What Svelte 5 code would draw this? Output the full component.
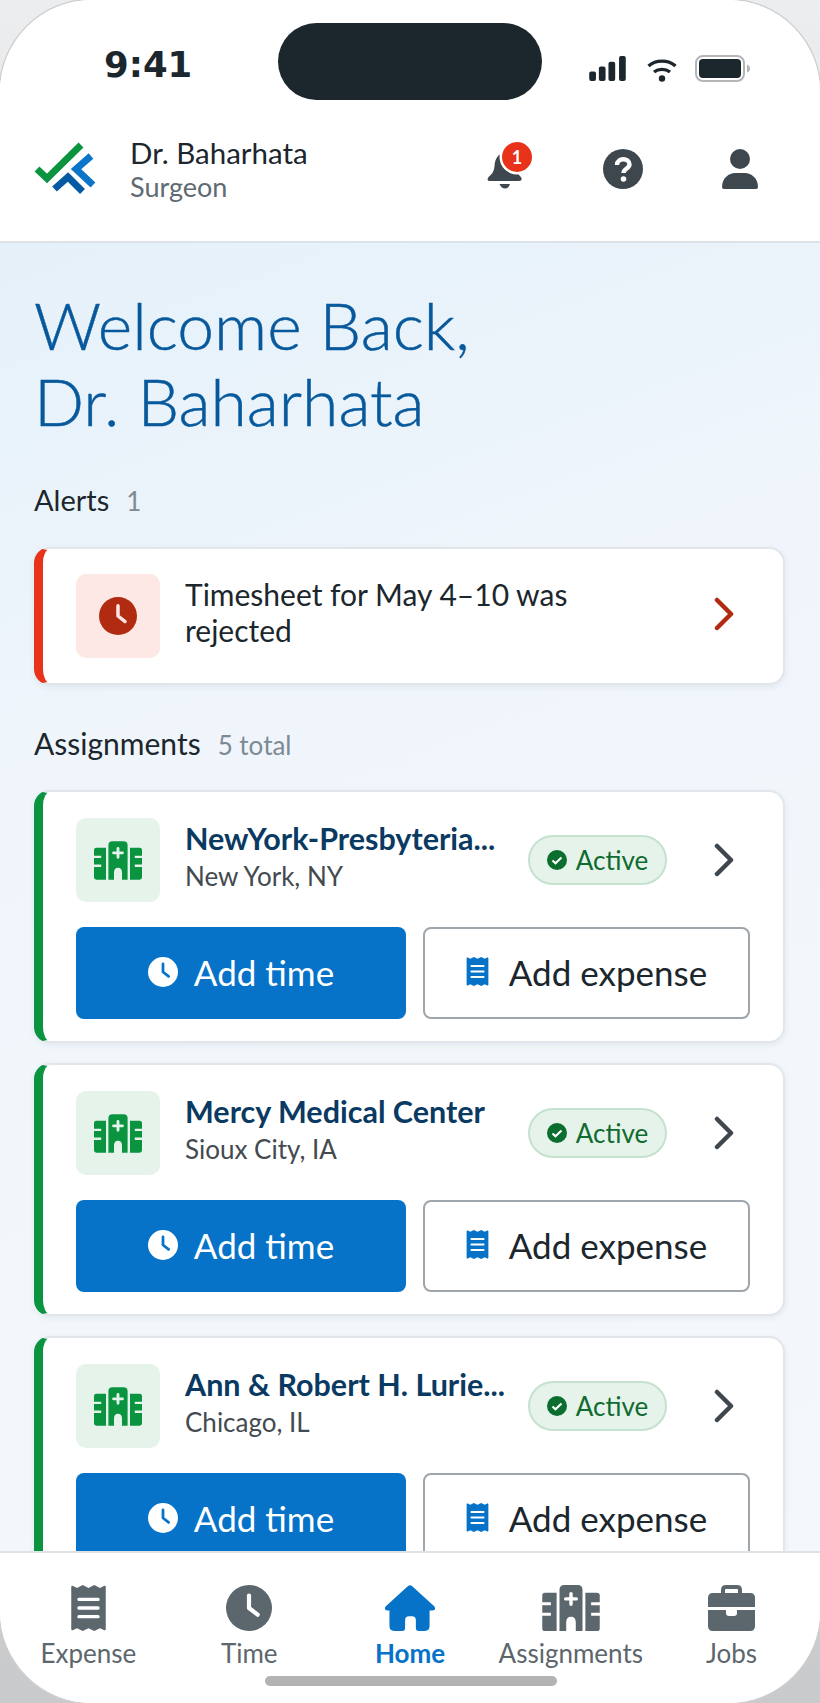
<script>
  const cards = [
    { title: 'NewYork-Presbyteria...', sub: 'New York, NY' },
    { title: 'Mercy Medical Center', sub: 'Sioux City, IA' },
    { title: 'Ann & Robert H. Lurie...', sub: 'Chicago, IL' }
  ];
</script>

{#snippet clock(size, bg, hand)}
  <svg class="ico" width={size} height={size} viewBox="0 0 48 48">
    <circle cx="24" cy="24" r="24" fill={bg} />
    <path d="M24 11v13l9 7" fill="none" stroke={hand} stroke-width="4.400" stroke-linecap="round" stroke-linejoin="round" />
  </svg>
{/snippet}

{#snippet receipt(w, h, color, line)}
  <svg class="ico" width={w} height={h} viewBox="0 0 36 48">
    <path d="M0 2 Q0 0 2 1L6 3 12 0 18 3 24 0 30 3 34 1Q36 0 36 2V46Q36 48 34 47L30 45 24 48 18 45 12 48 6 45 2 47Q0 48 0 46Z" fill={color} />
    <path d="M8 15h20M8 24h20M8 33h20" stroke={line} stroke-width="3.400" stroke-linecap="round" />
  </svg>
{/snippet}

{#snippet hospital(w, h, color, line)}
  <svg class="ico" width={w} height={h} viewBox="0 0 60 48">
    <path d="M18 5Q18 0 23 0H37Q42 0 42 5V48H35V39Q35 33 30 33T25 39V48H18Z" fill={color} />
    <path d="M0 11Q0 8 3 8H15V48H3Q0 48 0 45V32H9V29H0V21H9V18H0Z" fill={color} />
    <path d="M60 11Q60 8 57 8H45V48H57Q60 48 60 45V32H51V29H60V21H51V18H60Z" fill={color} />
    <path d="M30 9v11M24.500 14.500h11" stroke={line} stroke-width="3.600" stroke-linecap="round" />
  </svg>
{/snippet}

<div class="phone">
  <header class="top">
    <div class="status">
      <span class="clock">9:41</span>
      <div class="island"></div>
      <div class="sys">
        <svg width="37" height="25" viewBox="0 0 38 26" fill="#1b262d">
          <rect x="0" y="16" width="7" height="10" rx="2" /><rect x="10" y="11" width="7" height="15" rx="2" /><rect x="20" y="6" width="7" height="20" rx="2" /><rect x="31" y="0" width="7" height="26" rx="2" />
        </svg>
        <svg class="wifi" width="30" height="24" viewBox="0 0 30 24" fill="none" stroke="#1b262d" stroke-width="3.400">
          <path d="M1.500 8C9 1.500 21 1.500 28.500 8" /><path d="M7 14C11.500 10.500 18.500 10.500 23 14" />
          <circle cx="15" cy="20.500" r="3.200" fill="#1b262d" stroke="none" />
        </svg>
        <svg width="56" height="27" viewBox="0 0 56 27">
          <rect x="1" y="1" width="48" height="25" rx="7" fill="none" stroke="#b3b5b7" stroke-width="2" />
          <rect x="4" y="4" width="42" height="19" rx="4" fill="#1b262d" />
          <path d="M52 9.500Q55 10.500 55 13.500T52 17.500Z" fill="#b3b5b7" />
        </svg>
      </div>
    </div>
    <div class="brandbar">
      <div class="brand">
        <svg width="64" height="56" viewBox="0 0 64 56" fill="none">
          <path d="M3 27L13 36.500 47 3" stroke="#0a9440" stroke-width="7" />
          <path d="M57 14L42 27 59 43" stroke="#0b76c9" stroke-width="7" />
          <path d="M20.500 47L34 35 48.500 49.500" stroke="#0659a3" stroke-width="7" />
        </svg>
        <div class="who">
          <div class="name">Dr. Baharhata</div>
          <div class="role">Surgeon</div>
        </div>
      </div>
      <div class="actions">
        <div class="bell">
          <svg width="36" height="36" viewBox="0 0 36 36" fill="#3f474e">
            <path d="M18 0C11 0 8 6 7.500 13C7 19 5 21 1.500 24Q-1 28 3 28H32Q36 28 34 24C31 21 29 19 28.500 13C28 6 25 0 18 0Z" />
            <path d="M12.500 31H23Q21.500 35.500 18 35.500T12.500 31Z" />
          </svg>
          <span class="badge">1</span>
        </div>
        <svg width="40" height="40" viewBox="0 0 40 40">
          <circle cx="20" cy="20" r="20" fill="#3f474e" />
          <path d="M14 16C14 8.500 26.500 8.500 26.500 15.500C26.500 19.500 20.500 19.500 20.500 24" fill="none" stroke="#fff" stroke-width="4.400" />
          <circle cx="20.500" cy="30" r="2.800" fill="#fff" />
        </svg>
        <svg width="36" height="40" viewBox="0 0 36 40" fill="#3f474e">
          <circle cx="18" cy="10" r="10" />
          <path d="M0 38C0 29 7 24 13 24H23C29 24 36 29 36 38Q36 40 34 40H2Q0 40 0 38Z" />
        </svg>
      </div>
    </div>
  </header>

  <main class="content">
    <h1>Welcome Back,<br />Dr. Baharhata</h1>

    <div class="section alerts"><span class="label">Alerts</span><span class="count">1</span></div>
    <section class="card alert">
      <div class="row">
        <div class="tile tile-red">{@render clock(38, '#b12a12', '#fde8e6')}</div>
        <div class="alert-text">Timesheet for May 4–10 was rejected</div>
        <svg class="chev" width="20" height="34" viewBox="0 0 20 34" fill="none" stroke="#b12a12" stroke-width="4.500" stroke-linecap="round" stroke-linejoin="round"><path d="M3 3L17 17 3 31" /></svg>
      </div>
    </section>

    <div class="section second"><span class="label">Assignments</span><span class="count">5 total</span></div>
    <div class="list">
      {#each cards as c}
        <section class="card assign">
          <div class="row">
            <div class="tile tile-green">{@render hospital(48, 39, '#0a9440', '#e6f3eb')}</div>
            <div class="info">
              <div class="title">{c.title}</div>
              <div class="sub">{c.sub}</div>
            </div>
            <div class="pill">
              <svg width="20" height="20" viewBox="0 0 20 20"><circle cx="10" cy="10" r="10" fill="#0b6d2e" /><path d="M5.500 10.500L8.500 13.300 14.500 7.500" fill="none" stroke="#fff" stroke-width="2.200" /></svg>
              Active
            </div>
            <svg class="chev" width="20" height="34" viewBox="0 0 20 34" fill="none" stroke="#3f474e" stroke-width="4.500" stroke-linecap="round" stroke-linejoin="round"><path d="M3 3L17 17 3 31" /></svg>
          </div>
          <div class="btns">
            <button class="btn primary">{@render clock(30, '#fff', '#0673c8')}Add time</button>
            <button class="btn secondary">{@render receipt(23, 29, '#0673c8', '#fff')}Add expense</button>
          </div>
        </section>
      {/each}
    </div>
  </main>

  <nav class="tabs">
    <div class="tab">{@render receipt(35, 46, '#5c666d', '#fff')}<span>Expense</span></div>
    <div class="tab">{@render clock(46, '#5c666d', '#fff')}<span>Time</span></div>
    <div class="tab on">
      <svg class="ico" width="52" height="46" viewBox="0 0 52 47" fill="#0673c8">
        <path d="M24 1Q26 -0.500 28 1L51 22Q53 26 49 26H46V42Q46 47 41 47H35Q32 47 32 44V36Q32 32 28 32H25Q21 32 21 36V44Q21 47 18 47H10Q5 47 5 42V26H3Q-1 26 1 22Z" />
      </svg>
      <span>Home</span>
    </div>
    <div class="tab">{@render hospital(58, 46, '#5c666d', '#fff')}<span>Assignments</span></div>
    <div class="tab">
      <svg class="ico" width="47" height="46" viewBox="0 0 47 46" fill="#5c666d">
        <path d="M13 8V5Q13 0 18 0H29Q34 0 34 5V8H30V5Q30 4 29 4H18Q17 4 17 5V8Z" />
        <path d="M5 8H42Q47 8 47 13V22H0V13Q0 8 5 8Z" />
        <path d="M0 25H18V28Q18 31 21 31H26Q29 31 29 28V25H47V41Q47 46 42 46H5Q0 46 0 41Z" />
      </svg>
      <span>Jobs</span>
    </div>
  </nav>
  <div class="home-bar"></div>
</div>

<style>
  :global(body) {
    margin: 0;
    background: linear-gradient(180deg, #ecedee 0%, #c9cacb 100%);
  }
  .phone {
    position: relative;
    width: 820px;
    height: 1703px;
    display: flex;
    flex-direction: column;
    overflow: hidden;
    border-radius: 92px;
    box-shadow: 0 0 0 1.500px #cfd0d1;
    font-family: Lato, "Noto Sans", sans-serif;
    color: #1b262d;
    background: #fff;
  }
  .top {
    flex: none;
    background: #fff;
    border-bottom: 2px solid #dde2e7;
    height: 241px;
    box-sizing: content-box;
  }
  .status {
    height: 100px;
    position: relative;
  }
  .clock {
    position: absolute;
    left: 104px;
    top: 42px;
    font: bold 35.500px/46px "DejaVu Sans", sans-serif;
    color: #1b262d;
  }
  .island {
    position: absolute;
    left: 278px;
    top: 23px;
    width: 264px;
    height: 77px;
    border-radius: 39px;
    background: #1b262d;
  }
  .sys {
    position: absolute;
    left: 589px;
    top: 55px;
    display: flex;
    align-items: center;
    gap: 18px;
  }
  .wifi { margin-left: 3px; margin-top: 2px; }
  .brandbar {
    display: flex;
    align-items: center;
    justify-content: space-between;
    height: 141px;
    padding: 0 62px 0 34px;
  }
  .brand { display: flex; align-items: center; gap: 32px; margin-top: -1px; }
  .name { font-size: 29.500px; line-height: 34px; color: #1b262d; }
  .role { font-size: 27px; line-height: 34px; color: #5f6a72; }
  .actions { display: flex; align-items: center; margin-top: -4px; width: 271px; justify-content: space-between; }
  .bell { position: relative; width: 36px; height: 36px; margin-top: 4px; }
  .bell svg { display: block; }
  .badge {
    position: absolute;
    left: 15px;
    top: -11px;
    width: 30px;
    height: 30px;
    border-radius: 50%;
    background: #e8331a;
    box-shadow: 0 0 0 2.500px #fff;
    color: #fff;
    font-size: 18px;
    font-weight: 700;
    line-height: 30px;
    text-align: center;
  }
  .content {
    flex: 1;
    min-height: 0;
    overflow: hidden;
    padding: 0 35px 0 34px;
    background: linear-gradient(160deg, #e5f1fa 0%, #eff5fb 33%, #f3f7fb 70%, #f4f7fb 100%);
  }
  h1 {
    margin: 44px 0 0 0;
    font-size: 66px;
    line-height: 76px;
    font-weight: 300;
    color: #07599c;
    -webkit-text-stroke: .5px #07599c;
  }
  .section { display: flex; align-items: baseline; gap: 17px; margin-top: 44px; height: 34px; }
  .second { margin-top: 41px; }
  .label { font-size: 30px; line-height: 34px; color: #1b262d; }
  .alerts .label { font-size: 29px; }
  .count { font-size: 26px; color: #7d8a93; }
  .card {
    box-sizing: border-box;
    background: #fff;
    border: 2px solid #e2e6ea;
    border-left: 9px solid;
    border-radius: 16px;
    box-shadow: 0 2px 6px rgba(40, 60, 80, .08);
    padding: 25px 33px 0 33px;
  }
  .alert { margin-top: 30px; height: 138px; border-left-color: #e8331a; }
  .list { margin-top: 30px; display: flex; flex-direction: column; gap: 20px; }
  .assign { height: 253px; padding-top: 26px; border-left-color: #0a9440; flex: none; }
  .row { display: flex; align-items: center; }
  .tile {
    flex: none;
    width: 84px;
    height: 84px;
    border-radius: 10px;
    display: flex;
    align-items: center;
    justify-content: center;
  }
  .tile-red { background: #fde8e6; }
  .tile-green { background: #e6f3eb; }
  .alert-text { margin: -9px 0 0 25px; width: 420px; font-size: 30px; line-height: 36px; color: #1b262d; }
  .alert .chev { margin: -4px 16px 0 auto; }
  .assign .chev { margin-left: auto; margin-right: 16px; }
  .info { margin: -7px 0 0 25px; width: 318px; min-width: 0; }
  .title {
    font-size: 30.500px;
    font-weight: 700;
    line-height: 38px;
    color: #0a3a62;
    white-space: nowrap;
  }
  .sub { font-size: 26px; line-height: 38px; color: #434a50; }
  .pill {
    box-sizing: border-box;
    margin-left: 25px;
    width: 139px;
    height: 50px;
    display: flex;
    align-items: center;
    justify-content: center;
    gap: 9px;
    border: 2px solid #c4e2cd;
    border-radius: 25px;
    background: #e6f3eb;
    color: #0f6b2f;
    font-size: 26px;
  }
  .btns { display: flex; gap: 17px; margin-top: 25px; }
  .btn {
    box-sizing: border-box;
    height: 92px;
    display: flex;
    align-items: center;
    justify-content: center;
    gap: 16px;
    border-radius: 8px;
    font-family: inherit;
    font-size: 35px;
    padding: 0 0 3px;
  }
  .primary { flex: 1 1 330px; background: #0673c8; border: 0; color: #fff; }
  .secondary { flex: 1 1 327px; background: #fff; border: 2px solid #9ea5ab; color: #1b262d; gap: 20px; }
  .ico { display: block; flex: none; }
  .tabs {
    flex: none;
    height: 152px;
    box-sizing: border-box;
    background: #fff;
    border-top: 2px solid #dde2e7;
    padding: 32px 8px 0;
    display: grid;
    grid-template-columns: repeat(5, 1fr);
  }
  .tab {
    display: flex;
    flex-direction: column;
    align-items: center;
    gap: 6px;
    font-size: 26px;
    line-height: 32px;
    color: #5c666d;
  }
  .on { color: #0673c8; font-weight: 700; }
  .home-bar {
    position: absolute;
    left: 265px;
    top: 1676px;
    width: 292px;
    height: 10px;
    border-radius: 5px;
    background: #b3b3b3;
  }
</style>
